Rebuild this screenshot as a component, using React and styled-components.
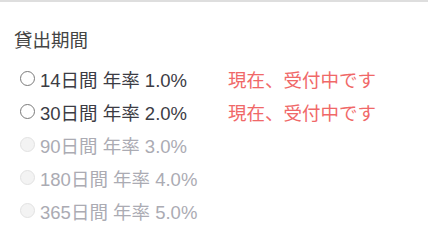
import React from "react";
import styled, { createGlobalStyle } from "styled-components";

const GlobalStyle = createGlobalStyle`
  body {
    margin: 0;
    background: #fff;
    font-family: "Liberation Sans", "Noto Sans CJK JP", sans-serif;
  }
`

const periods = [
  { days: 14, rate: "1.0", open: true },
  { days: 30, rate: "2.0", open: true },
  { days: 90, rate: "3.0", open: false },
  { days: 180, rate: "4.0", open: false },
  { days: 365, rate: "5.0", open: false },
]

const App = () => {
  return (
    <>
      <GlobalStyle />
      <Panel>
        <Title>貸出期間</Title>
        <Options>
          {periods.map((p) => (
            <Row key={p.days}>
              <Label disabled={!p.open}>
                <Radio type="radio" name="period" disabled={!p.open} />
                <span>{p.days}日間 年率 {p.rate}%</span>
              </Label>
              {p.open ? <Status>現在、受付中です</Status> : <span />}
            </Row>
          ))}
        </Options>
      </Panel>
    </>
  )
}

const Panel = styled.section`
  border-top: 2px solid #dedede;
  padding: 26px 14px 0;
  height: 215px;
`

const Title = styled.h2`
  margin: 0 0 8px;
  font-size: 18.5px;
  font-weight: normal;
  line-height: 26px;
  color: #444;
`

const Options = styled.div`
  display: grid;
  grid-template-columns: 208px auto;
  grid-auto-rows: 33px;
  align-items: center;
  padding-left: 6px;
`

const Row = styled.div`
  display: contents;
`

const Label = styled.label`
  display: flex;
  align-items: center;
  gap: 5px;
  font-size: 18.5px;
  color: ${(p) => (p.disabled ? "#ababb3" : "#3c3c44")};
  white-space: nowrap;
`

const Radio = styled.input`
  appearance: none;
  flex: none;
  margin: 0;
  width: 15px;
  height: 15px;
  border-radius: 50%;
  border: 1.5px solid #7a7a7a;
  background: #fff;
  box-sizing: border-box;

  &:disabled {
    border: 1px solid #e2e2e2;
    background: #f3f3f3;
  }
`

const Status = styled.span`
  font-size: 18.5px;
  color: #f06868;
  white-space: nowrap;
`

export default App
